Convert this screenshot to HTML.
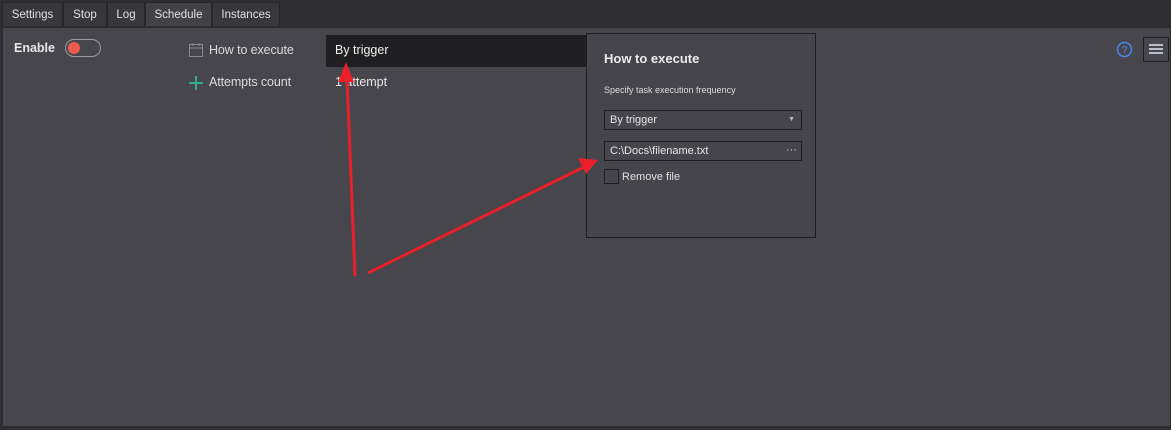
<!DOCTYPE html>
<html><head><meta charset="utf-8"><style>
body{margin:0;width:1171px;height:430px;background:#2f2f33;font-family:"Liberation Sans","DejaVu Sans",sans-serif;overflow:hidden;position:relative;color:#e6e6e6}
.tab{position:absolute;top:2px;height:24px;background:#38383c;border:1px solid #27272a;border-bottom:none;font-size:11.5px;line-height:24px;text-align:center;color:#e0e0e0;box-sizing:border-box}
.main{position:absolute;left:2px;top:27px;width:1169px;height:400px;background:#47464c;border:1px solid #2a2a2d;box-sizing:border-box}
.a{position:absolute}
</style></head><body>
<div class="tab" style="left:2px;width:61px">Settings</div>
<div class="tab" style="left:63px;width:44px">Stop</div>
<div class="tab" style="left:107px;width:38px">Log</div>
<div class="tab" style="left:145px;width:67px;background:#424146">Schedule</div>
<div class="tab" style="left:212px;width:68px">Instances</div>
<div class="main"></div>
<div class="a" style="left:14px;top:41px;font-size:12.5px;font-weight:bold;color:#e8e8e8">Enable</div>
<div class="a" style="left:65px;top:39px;width:36px;height:18px;border:1px solid #9a9aa0;border-radius:10px;box-sizing:border-box"></div>
<div class="a" style="left:68px;top:42px;width:12px;height:12px;border-radius:50%;background:#ee5a52"></div>
<svg class="a" style="left:189px;top:43px" width="14" height="14" viewBox="0 0 14 14"><rect x="0.5" y="1.5" width="13" height="12" fill="none" stroke="#8a8a90"/><line x1="0.5" y1="5" x2="13.5" y2="5" stroke="#8a8a90"/><line x1="4" y1="0" x2="4" y2="3" stroke="#8a8a90"/><line x1="10" y1="0" x2="10" y2="3" stroke="#8a8a90"/></svg>
<div class="a" style="left:209px;top:43px;font-size:12.5px;color:#dcdcdc;letter-spacing:-0.1px">How to execute</div>
<svg class="a" style="left:189px;top:76px" width="14" height="14"><line x1="7" y1="0" x2="7" y2="14" stroke="#2fb08a" stroke-width="2"/><line x1="0" y1="7" x2="14" y2="7" stroke="#2fb08a" stroke-width="2"/></svg>
<div class="a" style="left:209px;top:75px;font-size:12.5px;color:#dcdcdc;letter-spacing:-0.1px">Attempts count</div>
<div class="a" style="left:326px;top:35px;width:262px;height:32px;background:#1f1f22"></div>
<div class="a" style="left:335px;top:43px;font-size:12.5px;color:#f0f0f0">By trigger</div>
<div class="a" style="left:335px;top:75px;font-size:12.5px;color:#e8e8e8">1 attempt</div>
<div class="a" style="left:586px;top:33px;width:230px;height:205px;background:#46454b;border:1px solid #1f1f22;box-sizing:border-box"></div>
<div class="a" style="left:604px;top:51px;font-size:13px;font-weight:bold;color:#ececec">How to execute</div>
<div class="a" style="left:604px;top:85px;font-size:9px;color:#dcdcdc">Specify task execution frequency</div>
<div class="a" style="left:604px;top:110px;width:198px;height:20px;border:1px solid #1e1e21;box-sizing:border-box;font-size:11px;line-height:18px;padding-left:5px;color:#e6e6e6">By trigger<span style="position:absolute;right:6px;top:0;font-size:7px;color:#bbb">▼</span></div>
<div class="a" style="left:604px;top:141px;width:198px;height:20px;border:1px solid #1e1e21;box-sizing:border-box;font-size:11px;line-height:18px;padding-left:5px;color:#e6e6e6">C:\Docs\filename.txt<span style="position:absolute;right:4px;top:-1px;font-size:11px;color:#ccc">···</span></div>
<div class="a" style="left:604px;top:169px;width:15px;height:15px;border:1px solid #1e1e21;box-sizing:border-box"></div>
<div class="a" style="left:622px;top:171px;font-size:11px;color:#e0e0e0">Remove file</div>
<svg class="a" style="left:1116px;top:41px" width="17" height="17"><circle cx="8.5" cy="8.5" r="7" fill="none" stroke="#4a86e8" stroke-width="1.5"/><text x="8.5" y="12.5" font-size="11" fill="#4a86e8" text-anchor="middle" font-family="Liberation Sans">?</text></svg>
<div class="a" style="left:1143px;top:37px;width:26px;height:25px;border:1px solid #1e1e21;box-sizing:border-box"></div>
<div class="a" style="left:1149px;top:44px;width:14px;height:2px;background:#b8bcc8;box-shadow:0 4px 0 #b8bcc8,0 8px 0 #b8bcc8"></div>
<svg class="a" style="left:0;top:0" width="1171" height="430">
<line x1="355" y1="276" x2="347" y2="78" stroke="#e8202a" stroke-width="3"/>
<polygon points="346,62 338,82 354,82" fill="#e8202a"/>
<line x1="368" y1="273" x2="584" y2="167" stroke="#e8202a" stroke-width="3"/>
<polygon points="598,160 578,158 586,174" fill="#e8202a"/>
</svg>
</body></html>
